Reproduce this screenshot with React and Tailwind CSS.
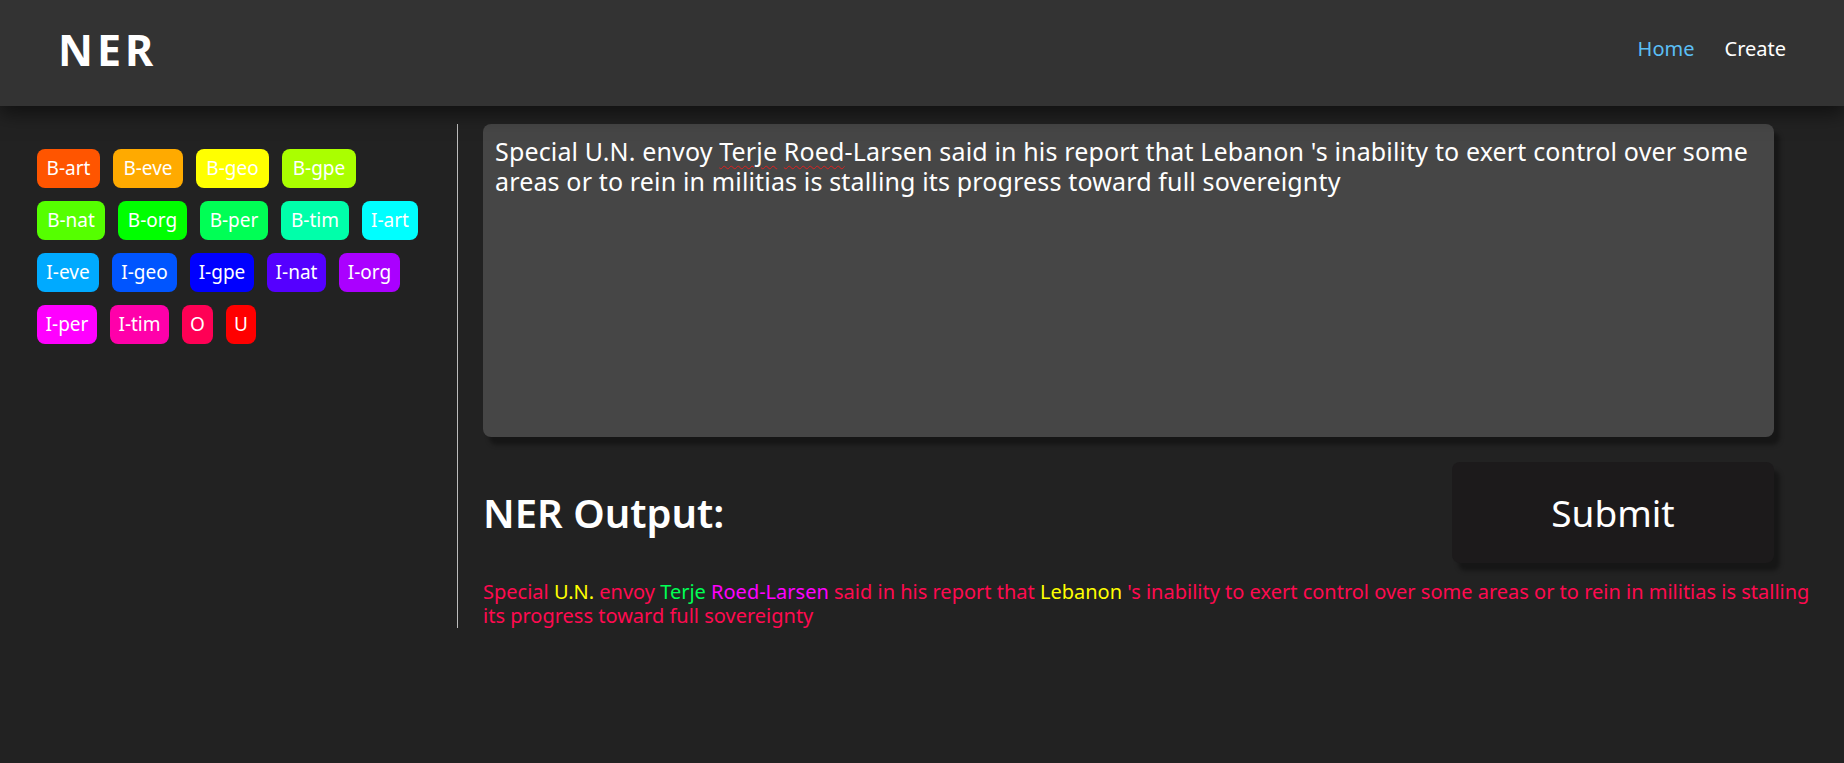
const tags = [
  { label: "B-art", cls: "bg-[#ff5500] w-[63px]" },
  { label: "B-eve", cls: "bg-[#ffaa00] w-[70px]" },
  { label: "B-geo", cls: "bg-[#ffff00] w-[73px]" },
  { label: "B-gpe", cls: "bg-[#aaff00] w-[74px]" },
  { label: "B-nat", cls: "bg-[#55ff00] w-[68px]" },
  { label: "B-org", cls: "bg-[#00ff00] w-[69px]" },
  { label: "B-per", cls: "bg-[#00ff55] w-[68px]" },
  { label: "B-tim", cls: "bg-[#00ffaa] w-[68px]" },
  { label: "I-art", cls: "bg-[#00ffff] w-[56px]" },
  { label: "I-eve", cls: "bg-[#00aaff] w-[62px]" },
  { label: "I-geo", cls: "bg-[#0055ff] w-[65px]" },
  { label: "I-gpe", cls: "bg-[#0000ff] w-[64px]" },
  { label: "I-nat", cls: "bg-[#5500ff] w-[59px]" },
  { label: "I-org", cls: "bg-[#aa00ff] w-[61px]" },
  { label: "I-per", cls: "bg-[#ff00ff] w-[60px]" },
  { label: "I-tim", cls: "bg-[#ff00aa] w-[59px]" },
  { label: "O", cls: "bg-[#ff0055] w-[31px]" },
  { label: "U", cls: "bg-[#ff0000] w-[30px]" },
];

// tokens of the tagged sentence, colour taken from the tag palette
const output = [
  { text: "Special", cls: "text-[#ff0a50]" },
  { text: "U.N.", cls: "text-[#ffff00]" },
  { text: "envoy", cls: "text-[#ff0a50]" },
  { text: "Terje", cls: "text-[#00ff55]" },
  { text: "Roed-Larsen", cls: "text-[#ff00ff]" },
  { text: "said in his report that", cls: "text-[#ff0a50]" },
  { text: "Lebanon", cls: "text-[#ffff00]" },
  {
    text: "'s inability to exert control over some areas or to rein in militias is stalling its progress toward full sovereignty",
    cls: "text-[#ff0a50]",
  },
];

export default function App() {
  return (
    <div className="min-h-screen bg-[#222222] font-['Noto_Sans',sans-serif] text-white">
      {/* Navbar */}
      <header className="relative z-10 flex h-[106px] items-center justify-between bg-[#333333] px-[58px] pb-[8px] shadow-[0_8px_18px_rgba(0,0,0,0.5)]">
        <span className="text-[43px] font-bold leading-none tracking-[4px]">NER</span>
        <nav className="flex items-center gap-[30px] text-[20px]">
          <a className="text-[#5bbff5]" href="#">Home</a>
          <a className="text-white" href="#">Create</a>
        </nav>
      </header>

      <div className="mt-[18px] flex">
        {/* Tag legend */}
        <aside className="w-[458px] shrink-0 border-r border-[#bdbdbd] pl-[37px] pr-[32px] pt-[25px]">
          <div className="flex flex-wrap gap-[13px]">
            {tags.map((tag) => (
              <span
                key={tag.label}
                className={`flex h-[39px] items-center justify-center rounded-lg text-[19px] ${tag.cls}`}
              >
                {tag.label}
              </span>
            ))}
          </div>
        </aside>

        {/* Input + output */}
        <main className="flex-1 pl-[25px] pr-[16px]">
          <div className="h-[313px] w-[1291px] rounded-lg bg-[#464646] p-3 text-[25px] leading-[30px] tracking-[0.15px] shadow-[6px_8px_4px_rgba(0,0,0,0.35)]">
            Special U.N. envoy{" "}
            <span className="underline decoration-[#e02020] decoration-wavy decoration-1 underline-offset-4">Terje</span>{" "}
            <span className="underline decoration-[#e02020] decoration-wavy decoration-1 underline-offset-4">Roed</span>
            -Larsen said in his report that Lebanon 's inability to exert control over some areas or to rein in militias
            is stalling its progress toward full sovereignty
          </div>

          <div className="mt-[25px] flex w-[1291px] items-center justify-between">
            <h2 className="text-[40px] font-semibold leading-[48px]">NER Output:</h2>
            <button className="h-[101px] w-[322px] rounded-lg bg-[#1c1a1b] text-[37px] shadow-[6px_8px_4px_rgba(0,0,0,0.35)]">
              Submit
            </button>
          </div>

          <p className="mt-[17px] text-[20px] leading-[24px]">
            {output.map((tok, i) => (
              <span key={i} className={tok.cls}>
                {tok.text}
                {i < output.length - 1 ? " " : ""}
              </span>
            ))}
          </p>
        </main>
      </div>
    </div>
  );
}
